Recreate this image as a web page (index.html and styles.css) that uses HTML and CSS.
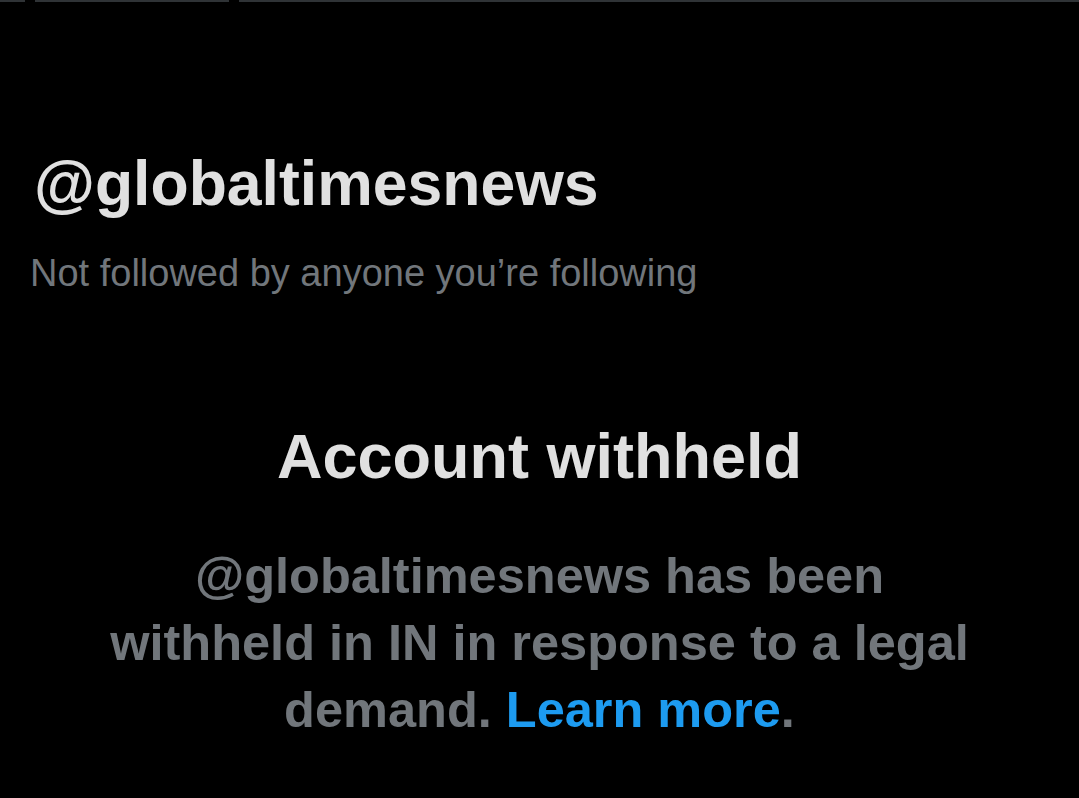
FILE: index.html
```html
<!DOCTYPE html>
<html lang="en">

<head>
    <meta charset="UTF-8">
    <title>@globaltimesnews</title>
    <link rel="stylesheet" href="styles.css">
</head>

<body>
    <div class="tabBar">
        <span class="tabLine tabFirst"></span>
        <span class="tabLine tabSecond"></span>
        <span class="tabLine tabRest"></span>
    </div>
    <div class="profileHeader">
        <h1 class="handle">@globaltimesnews</h1>
        <p class="followedBy">Not followed by anyone you’re following</p>
    </div>
    <div class="withheldNotice">
        <h2 class="noticeTitle">Account withheld</h2>
        <p class="noticeText">@globaltimesnews has been withheld in IN in response to a legal demand. <a href="#" class="learnMore">Learn more</a>.</p>
    </div>
</body>

</html>
```

FILE: styles.css
```css
        body, h1, h2, p { margin: 0; padding: 0; }
        body { font-family: "Liberation Sans", Arial, sans-serif; background-color: #000; color: #e0e0e0; }
        .tabBar { display: flex; gap: 10px; height: 2px; }
        .tabLine { display: block; height: 2px; background-color: #2f3336; }
        .tabFirst { width: 25px; }
        .tabSecond { width: 194px; }
        .tabRest { flex: 1; }
        .profileHeader { padding: 144px 0 0 34px; }
        .handle { font-size: 62.5px; font-weight: bold; line-height: 74px; }
        .followedBy { font-size: 38px; color: #71767b; line-height: 44px; margin: 31px 0 0 -4px; }
        .withheldNotice { text-align: center; padding: 124px 100px 0; }
        .noticeTitle { font-size: 63px; font-weight: bold; line-height: 74px; }
        .noticeText { font-size: 50.5px; font-weight: bold; color: #71767b; line-height: 67px; margin-top: 49px; padding: 0 2px; }
        .learnMore { color: #1d9bf0; text-decoration: none; }
```
